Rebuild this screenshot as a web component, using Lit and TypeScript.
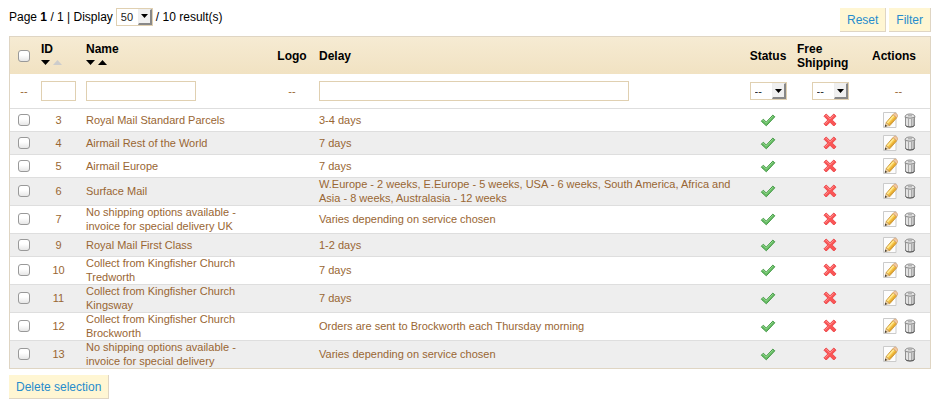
import { LitElement, html, css, svg } from "lit";
import { customElement, property } from "lit/decorators.js";

interface Carrier {
  id: number;
  name: string;
  delay: string;
}

const CARRIERS: Carrier[] = [
  { id: 3, name: "Royal Mail Standard Parcels", delay: "3-4 days" },
  { id: 4, name: "Airmail Rest of the World", delay: "7 days" },
  { id: 5, name: "Airmail Europe", delay: "7 days" },
  {
    id: 6,
    name: "Surface Mail",
    delay:
      "W.Europe - 2 weeks, E.Europe - 5 weeks, USA - 6 weeks, South America, Africa and Asia - 8 weeks, Australasia - 12 weeks",
  },
  { id: 7, name: "No shipping options available - invoice for special delivery UK", delay: "Varies depending on service chosen" },
  { id: 9, name: "Royal Mail First Class", delay: "1-2 days" },
  { id: 10, name: "Collect from Kingfisher Church Tredworth", delay: "7 days" },
  { id: 11, name: "Collect from Kingfisher Church Kingsway", delay: "7 days" },
  { id: 12, name: "Collect from Kingfisher Church Brockworth", delay: "Orders are sent to Brockworth each Thursday morning" },
  { id: 13, name: "No shipping options available - invoice for special delivery", delay: "Varies depending on service chosen" },
];

const shapes = {
  check: svg`
    <path d="M1.300 9.200 3.300 7.200l3 2.900 6.500-7 2 1.700-8.500 9z" fill="#66bd63" stroke="#479a49" stroke-linejoin="round"/>
    <path d="M2.600 9 3.400 8.200l2.900 2.900 6.600-7" fill="none" stroke="#93d68d"/>`,
  cross: svg`
    <path d="M2 4.200 4.200 2 8 5.800 11.800 2 14 4.200 10.200 8l3.800 3.800-2.200 2.200L8 10.200 4.200 14 2 11.800 5.800 8z" fill="#fb5555" stroke="#ec4a4d" stroke-linejoin="round"/>
    <path d="M3.300 4.200 4.200 3.300 8 7.100l3.800-3.800M3.300 11.800 6.600 8.500" fill="none" stroke="#ff9090"/>`,
  edit: svg`
    <path d="M1.500 .5h12.500v15H1.500z" fill="#fdfdfd" stroke="#cbcbcb"/>
    <path d="M4 10.800 11 2.500 14.800 5.700 7.700 13.800z" fill="#f6c443" stroke="#c08a2c" stroke-width=".8" stroke-linejoin="round"/>
    <path d="M5.300 10.900 12 3.500" stroke="#ffe994" stroke-width="1.500"/>
    <path d="M7.300 12.700 13.900 5.400" stroke="#dc9a2b" stroke-width="1"/>
    <path d="M11 2.500 12.200 1.300q.9-.6 1.800.1l1.500 1.400q.7.900 0 1.700L14.600 5.700z" fill="#f2c7a0" stroke="#cf9d6b" stroke-width=".7"/>
    <path d="M3 14.600 4 10.800 7.500 13.700z" fill="#f3d7a6" stroke="#b98d4e" stroke-width=".5"/>
    <path d="M2.700 14.900 3.400 12.600 5.100 14z" fill="#333"/>`,
  bin: svg`
    <path d="M3.500 4.500h9v9q-.5 1.500-4.500 1.500t-4.500-1.500z" fill="#d2d2d2" stroke="#8f8f8f"/>
    <path d="M5 6.500v7.500M8 7v7.500" stroke="#f4f4f4"/>
    <path d="M6.500 6.500v8M9.500 6.500v8M11.300 6.500v7.500" stroke="#a8a8a8"/>
    <path d="M3.500 13.300q.8 1.700 4.500 1.700t4.500-1.700" fill="none" stroke="#555"/>
    <path d="M3 5.300q0-3.300 5-3.300t5 3.300q-5 1.800-10 0z" fill="#e4e4e4" stroke="#8c8c8c"/>
    <path d="M6 3.800h4" stroke="#9d9d9d"/>`,
};

@customElement("carrier-icon")
export class CarrierIcon extends LitElement {
  @property() name: keyof typeof shapes = "check";

  static styles = css`
    :host { display: block; width: 16px; height: 16px; }
    .art { display: block; }
  `;

  render() {
    return html`<svg class="art" width="16" height="16" viewBox="0 0 16 16" aria-hidden="true">${shapes[this.name]}</svg>`;
  }
}

@customElement("app-root")
export class AppRoot extends LitElement {
  static styles = css`
    :host {
      display: block;
      padding: 8px 12px 16px 9px;
      background: #fff;
      color: #000;
      font: 12px/14px Arial, "Liberation Sans", sans-serif;
    }
    .toolbar { display: flex; justify-content: space-between; align-items: flex-start; margin-bottom: 4px; }
    .paging { display: flex; align-items: center; gap: 3px; height: 17px; white-space: pre; }
    .buttons { display: flex; gap: 3px; }
    .button {
      height: 24px;
      padding: 0 7px;
      border: solid #dfd5c3;
      border-width: 0 1px 1px 0;
      background: #fff6d3;
      color: #268ccd;
      font: inherit;
      cursor: pointer;
    }
    .picker { display: inline-grid; height: 18px; vertical-align: middle; }
    .select {
      grid-area: 1 / 1;
      appearance: none;
      width: 37px;
      height: 18px;
      padding: 0 0 0 4px;
      border: 1px solid #e0d0b1;
      border-radius: 0;
      background: #fff;
      color: #222;
      font: 11px/14px Arial, "Liberation Sans", sans-serif;
    }
    .arrow {
      grid-area: 1 / 1;
      justify-self: end;
      display: grid;
      place-items: center;
      box-sizing: border-box;
      width: 14px;
      height: 16px;
      margin: 1px;
      border: solid;
      border-width: 1px 2px 2px 1px;
      border-color: #eee #888 #888 #eee;
      background: #f0f0f0;
      pointer-events: none;
    }
    .table {
      width: 100%;
      table-layout: fixed;
      border-collapse: separate;
      border-spacing: 0;
      border: 1px solid #dfd5c3;
    }
    .col-check { width: 28px; }
    .col-id { width: 41px; }
    .col-name { width: 191px; }
    .col-logo { width: 44px; }
    .col-status { width: 50px; }
    .col-free { width: 74px; }
    .col-actions { width: 63px; }
    .head { height: 37px; background: linear-gradient(#f6ebd3, #f1e2c2); }
    .head th { padding: 0; text-align: left; font-weight: bold; }
    .filters { height: 34px; }
    .row { height: 23px; }
    .row td, .filters td { padding: 0; color: #963; font-size: 11px; }
    .row td { box-shadow: inset 0 1px #dedede; }
    .row:nth-child(even) { background: #eee; }
    .table .center { text-align: center; }
    .table .id { padding: 0 3px; }
    .table .name { padding: 0 24px 0 7px; }
    .table .delay { padding: 0 8px 0 5px; }
    .table .free { padding-left: 4px; }
    .table .actions { padding-left: 5px; }
    .sort { display: flex; align-items: center; gap: 3px; height: 14px; }
    .way { display: block; padding: 0; border: 0; background: none; color: #000; cursor: pointer; }
    .way.off { color: #ccc; }
    .glyph { display: block; }
    .check {
      appearance: none;
      display: block;
      width: 12px;
      height: 12px;
      margin: 0 auto;
      border: 1px solid #999;
      border-radius: 3px;
      background: linear-gradient(#fff, #fff 40%, #e6e6e6);
    }
    .check:checked { background: #268ccd; }
    .text {
      display: block;
      box-sizing: border-box;
      height: 20px;
      padding: 0 3px;
      border: 1px solid #e0d0b1;
      background: #fff;
      font: inherit;
    }
    .text.short { width: 35px; }
    .text.medium { width: 110px; }
    .text.long { width: 310px; max-width: 100%; }
    .mark { margin: 0 auto; }
    .tools { display: flex; justify-content: center; gap: 4px; padding-left: 3px; }
    .tool { display: block; }
    .delete { margin-top: 6px; }
  `;

  private triangle(up: boolean) {
    return html`<svg class="glyph" width="9" height="5" viewBox="0 0 9 5" aria-hidden="true">
      <path d=${up ? "M0 5 4.500 0 9 5z" : "M0 0h9L4.500 5z"} fill="currentColor" />
    </svg>`;
  }

  private sorter(label: string, ascending: boolean) {
    return html`<div class="sort">
      <button class="way" aria-label="${label} descending">${this.triangle(false)}</button>
      <button class="way ${ascending ? "" : "off"}" aria-label="${label} ascending">${this.triangle(true)}</button>
    </div>`;
  }

  private picker(label: string, values: string[]) {
    return html`<span class="picker">
      <select class="select" aria-label=${label}>
        ${values.map((v) => html`<option>${v}</option>`)}
      </select>
      <span class="arrow"><svg class="glyph" width="7" height="4" viewBox="0 0 7 4" aria-hidden="true"><path d="M0 0h7L3.500 4z" /></svg></span>
    </span>`;
  }

  private row(c: Carrier) {
    return html`<tr class="row">
      <td><input class="check" type="checkbox" aria-label="Select ${c.name}" /></td>
      <td class="id center">${c.id}</td>
      <td class="name">${c.name}</td>
      <td></td>
      <td class="delay">${c.delay}</td>
      <td><carrier-icon class="mark" name="check"></carrier-icon></td>
      <td><carrier-icon class="mark" name="cross"></carrier-icon></td>
      <td>
        <div class="tools">
          <a class="tool" href="#edit-${c.id}" aria-label="Edit"><carrier-icon name="edit"></carrier-icon></a>
          <a class="tool" href="#delete-${c.id}" aria-label="Delete"><carrier-icon name="bin"></carrier-icon></a>
        </div>
      </td>
    </tr>`;
  }

  render() {
    return html`
      <div class="toolbar">
        <div class="paging"><span>Page <b>1</b> / 1 | Display</span>${this.picker("Display", ["50", "20", "100"])}<span>/ 10 result(s)</span></div>
        <div class="buttons">
          <button class="button">Reset</button>
          <button class="button">Filter</button>
        </div>
      </div>
      <table class="table">
        <colgroup>
          <col class="col-check" /><col class="col-id" /><col class="col-name" /><col class="col-logo" />
          <col /><col class="col-status" /><col class="col-free" /><col class="col-actions" />
        </colgroup>
        <thead>
          <tr class="head">
            <th><input class="check" type="checkbox" aria-label="Select all" /></th>
            <th class="id">ID${this.sorter("ID", false)}</th>
            <th class="name">Name${this.sorter("Name", true)}</th>
            <th class="center">Logo</th>
            <th class="delay">Delay</th>
            <th class="center">Status</th>
            <th class="free">Free Shipping</th>
            <th class="actions">Actions</th>
          </tr>
          <tr class="filters">
            <td class="center">--</td>
            <td class="id"><input class="text short" type="text" aria-label="Filter by ID" /></td>
            <td class="name"><input class="text medium" type="text" aria-label="Filter by name" /></td>
            <td class="center">--</td>
            <td class="delay"><input class="text long" type="text" aria-label="Filter by delay" /></td>
            <td class="center">${this.picker("Status", ["--", "Yes", "No"])}</td>
            <td class="center">${this.picker("Free shipping", ["--", "Yes", "No"])}</td>
            <td class="center">--</td>
          </tr>
        </thead>
        <tbody>
          ${CARRIERS.map((c) => this.row(c))}
        </tbody>
      </table>
      <button class="button delete">Delete selection</button>
    `;
  }
}
